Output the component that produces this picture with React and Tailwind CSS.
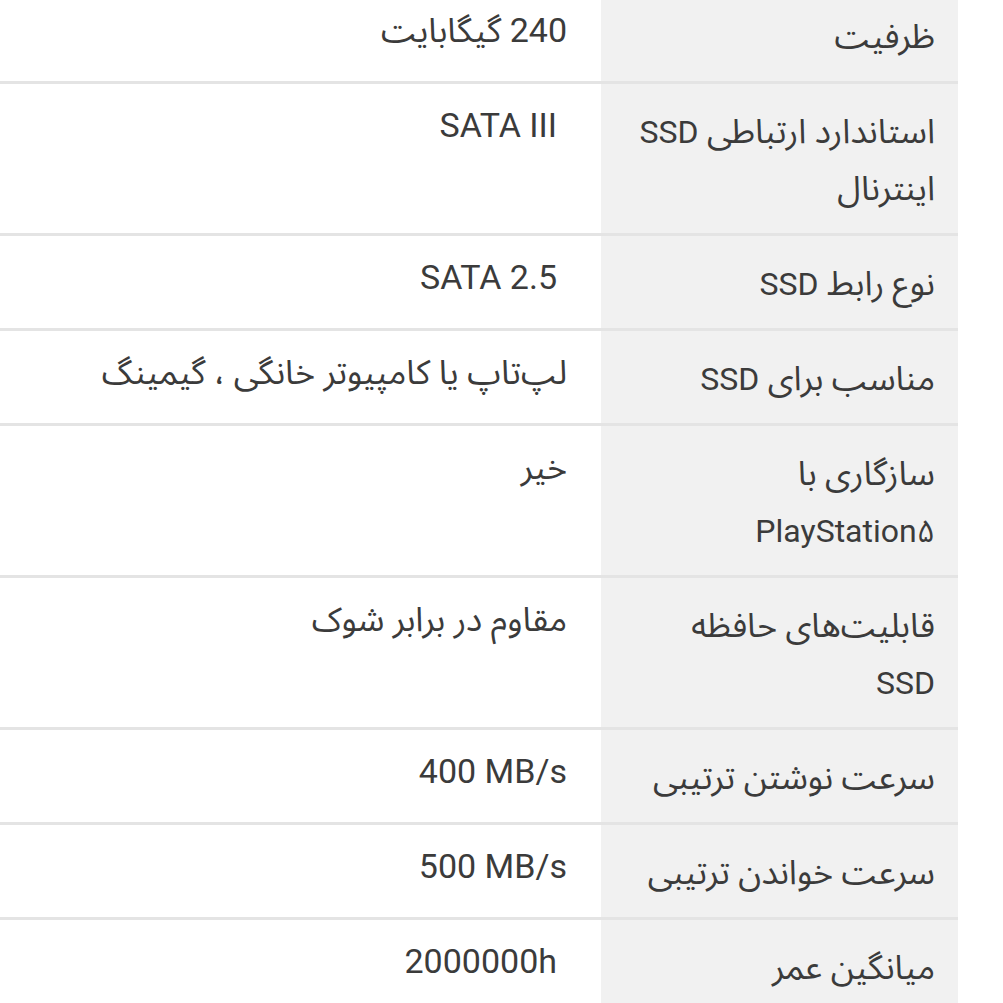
import React from "react";

const rows = [
  { label: ["ظرفیت"], value: "240 گیگابایت" },
  { label: ["استاندارد ارتباطی SSD", "اینترنال"], value: "SATA III", sp: true, ltr: true },
  { label: ["نوع رابط SSD"], value: "SATA 2.5", sp: true, ltr: true },
  { label: ["مناسب برای SSD"], value: "لپ‌تاپ یا کامپیوتر خانگی ، گیمینگ" },
  { label: ["سازگاری با", "PlayStation۵"], value: "خیر" },
  { label: ["قابلیت‌های حافظه", "SSD"], value: "مقاوم در برابر شوک" },
  { label: ["سرعت نوشتن ترتیبی"], value: "400 MB/s", ltr: true },
  { label: ["سرعت خواندن ترتیبی"], value: "500 MB/s", ltr: true },
  { label: ["میانگین عمر"], value: "2000000h", sp: true, ltr: true },
];

function Label({ text }) {
  const parts = text.split(/([A-Za-z0-9۵]+)/);
  return (
    <>
      {parts.map((p, i) =>
        /[A-Za-z0-9۵]/.test(p) ? (
          <span key={i}>{p}</span>
        ) : (
          <span key={i} className="text-[34px]">{p}</span>
        )
      )}
    </>
  );
}

export default function App() {
  return (
    <div className="w-[1003px] h-[1003px] overflow-hidden bg-white">
      <div
        dir="rtl"
        className="w-[958px] -mt-[11px] text-[#3b3b3b]"
        style={{ fontFamily: 'Roboto, "Noto Sans Arabic", "DejaVu Sans", sans-serif' }}
      >
        {rows.map((r, i) => (
          <div key={i} className="flex border-b-[3px] border-[#e4e4e4]">
            <div className="w-[357px] shrink-0 bg-[#f1f1f1] pr-[23px] pl-[10px] pt-[19px] pb-[16px] text-[32px] leading-[57px]">
              {r.label.map((l, j) => (
                <div key={j} className="whitespace-nowrap h-[57px]">
                  <Label text={l} />
                </div>
              ))}
            </div>
            <div className="flex-1 pr-[34px] pl-[10px] pt-[13px] text-[34px] leading-[57px] whitespace-nowrap">
              {r.sp ? <span className="inline-block w-[10px]"></span> : null}
              {r.ltr ? <bdi dir="ltr">{r.value}</bdi> : r.value}
            </div>
          </div>
        ))}
      </div>
    </div>
  );
}
